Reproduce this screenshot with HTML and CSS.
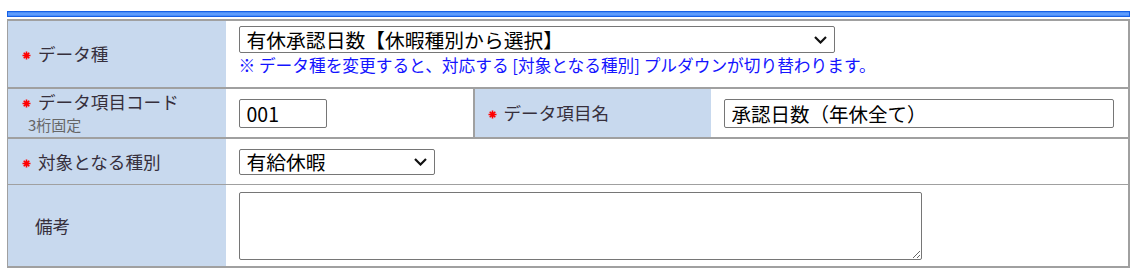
FILE: index.html
```html
<!DOCTYPE html>
<html lang="ja">
<head>
    <meta charset="UTF-8">
    <meta name="viewport" content="width=device-width, initial-scale=1.0">
    <title>データ項目設定</title>
    <link rel="stylesheet" href="styles.css">
</head>
<body>
    <div class="topbar"></div>
    <table class="form-table">
        <colgroup>
            <col class="c-label">
            <col class="c-code">
            <col class="c-label2">
            <col>
        </colgroup>
        <tr class="row-type">
            <th><svg class="req" width="9" height="9" viewBox="0 0 9 9"><path d="M4.5 0.5v8M0.5 4.5h8M1.7 1.7l5.6 5.6M7.3 1.7l-5.6 5.6"/></svg>データ種</th>
            <td colspan="3" class="cell-type">
                <span class="select-wrap sel-type">
                    <select>
                        <option>有休承認日数【休暇種別から選択】</option>
                    </select>
                    <svg class="chev" width="13" height="8" viewBox="0 0 13 8"><path d="M1 1l5.5 5.5L12 1"/></svg>
                </span>
                <p class="note">※ データ種を変更すると、対応する [対象となる種別] プルダウンが切り替わります。</p>
            </td>
        </tr>
        <tr class="row-code">
            <th>
                <svg class="req" width="9" height="9" viewBox="0 0 9 9"><path d="M4.5 0.5v8M0.5 4.5h8M1.7 1.7l5.6 5.6M7.3 1.7l-5.6 5.6"/></svg>データ項目コード
                <div class="sub">3桁固定</div>
            </th>
            <td class="cell-code"><input type="text" class="inp-code" value="001"></td>
            <th class="th-name"><svg class="req" width="9" height="9" viewBox="0 0 9 9"><path d="M4.5 0.5v8M0.5 4.5h8M1.7 1.7l5.6 5.6M7.3 1.7l-5.6 5.6"/></svg>データ項目名</th>
            <td><input type="text" class="inp-name" value="承認日数（年休全て）"></td>
        </tr>
        <tr class="row-kind">
            <th><svg class="req" width="9" height="9" viewBox="0 0 9 9"><path d="M4.5 0.5v8M0.5 4.5h8M1.7 1.7l5.6 5.6M7.3 1.7l-5.6 5.6"/></svg>対象となる種別</th>
            <td colspan="3">
                <span class="select-wrap sel-kind">
                    <select>
                        <option>有給休暇</option>
                    </select>
                    <svg class="chev" width="13" height="8" viewBox="0 0 13 8"><path d="M1 1l5.5 5.5L12 1"/></svg>
                </span>
            </td>
        </tr>
        <tr class="row-memo">
            <th class="th-plain">備考</th>
            <td colspan="3"><textarea class="memo"></textarea></td>
        </tr>
    </table>
</body>
</html>
```
FILE: styles.css
```css
body {
    margin: 0;
    padding: 11px 6px 0 7px;
    font-family: "Noto Sans CJK JP", "Noto Sans", sans-serif;
    color: #333;
    background: #fff;
}
.topbar {
    height: 6px;
    box-sizing: border-box;
    border: 1px solid #1760e6;
    background: linear-gradient(#3f86f5, #6aa4ff 50%, #3f86f5);
    margin-bottom: 2px;
}
.form-table {
    width: 100%;
    border-collapse: collapse;
    border-top: 2px solid #a0a0a0;
    border-bottom: 2px solid #a0a0a0;
    border-left: 1px solid #a0a0a0;
    border-right: 2px solid #a0a0a0;
    table-layout: fixed;
}
.c-label { width: 218px; }
.c-code { width: 248px; }
.c-label2 { width: 237px; }
.form-table th {
    background: #c8d9ee;
    font-weight: normal;
    font-size: 17.6px;
    color: #362f3c;
    text-align: left;
    padding: 0 0 0 14px;
    vertical-align: middle;
    line-height: 20px;
}
.form-table td {
    padding: 0 0 0 13px;
    vertical-align: middle;
}
.row-type th, .row-type td { border-bottom: 2px solid #a0a0a0; height: 66px; }
.row-code th, .row-code td { border-bottom: 2px solid #a0a0a0; height: 48px; }
.row-kind th, .row-kind td { border-bottom: 1px solid #a0a0a0; height: 45px; }
.row-memo th, .row-memo td { height: 81px; }
.form-table .cell-type { padding-bottom: 5px; height: 61px; }
.cell-code { border-right: 2px solid #a0a0a0; }
.th-name { padding-left: 13px !important; }
.th-plain { padding-left: 27px !important; }
.req {
    stroke: #ff0000;
    stroke-width: 1.6;
    fill: none;
    margin: 0 7px 0 0;
    vertical-align: 1px;
}
.sub {
    font-size: 15px;
    color: #666;
    line-height: 18px;
    margin-top: 4px;
    padding-left: 6px;
}
select, input, textarea {
    font-family: "Noto Sans CJK JP", "Noto Sans", sans-serif;
    color: #000;
    border: 1px solid #767676;
    border-radius: 2px;
    box-sizing: border-box;
    background: #fff;
}
.select-wrap {
    position: relative;
    display: block;
}
.select-wrap select {
    appearance: none;
    width: 100%;
    height: 100%;
    font-size: 19.8px;
    padding: 0 0 0 7px;
    line-height: 24px;
    display: block;
}
.chev {
    position: absolute;
    right: 8px;
    top: 50%;
    margin-top: -4px;
    fill: none;
    stroke: #111;
    stroke-width: 2.2;
    pointer-events: none;
}
.sel-type { width: 596px; height: 27px; }
.sel-kind { width: 196px; height: 26px; }
.note {
    margin: 0;
    color: #1414ff;
    font-size: 16.7px;
    line-height: 24px;
}
input {
    height: 29px;
    font-size: 19.5px;
    padding: 0 7px;
    display: block;
}
.inp-code { width: 88px; }
.inp-name { width: 390px; }
.memo {
    display: block;
    width: 683px;
    height: 68px;
    resize: both;
}
```
